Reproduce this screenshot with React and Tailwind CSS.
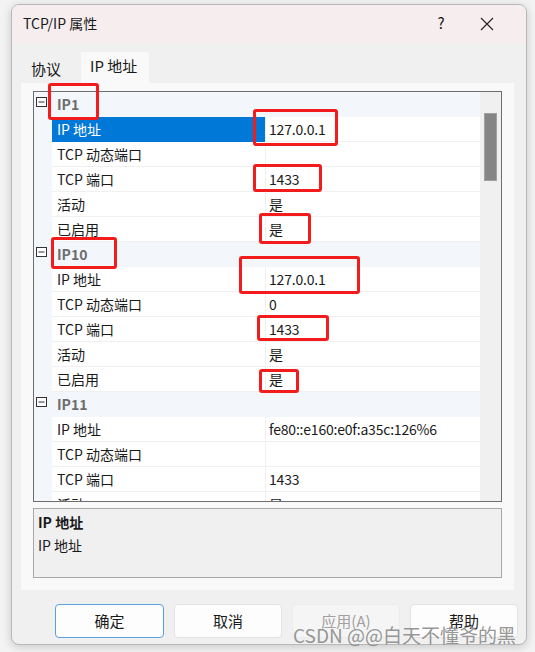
import React from 'react'

const groups = [
  { name: 'IP1', items: [['IP 地址', '127.0.0.1'], ['TCP 动态端口', ''], ['TCP 端口', '1433'], ['活动', '是'], ['已启用', '是']] },
  { name: 'IP10', items: [['IP 地址', '127.0.0.1'], ['TCP 动态端口', '0'], ['TCP 端口', '1433'], ['活动', '是'], ['已启用', '是']] },
  { name: 'IP11', items: [['IP 地址', 'fe80::e160:e0f:a35c:126%6'], ['TCP 动态端口', ''], ['TCP 端口', '1433'], ['活动', '是'], ['已启用', '是']] },
]

// red annotation boxes drawn over the screenshot
const marks = [
  'left-[48px] top-[83px] w-[51px] h-[37px]',
  'left-[253px] top-[109px] w-[85px] h-[37px]',
  'left-[253px] top-[164px] w-[69px] h-[28px]',
  'left-[259px] top-[213px] w-[52px] h-[31px]',
  'left-[51px] top-[237px] w-[66px] h-[32px]',
  'left-[239px] top-[256px] w-[121px] h-[38px]',
  'left-[257px] top-[315px] w-[72px] h-[26px]',
  'left-[259px] top-[369px] w-[40px] h-[24px]',
]

function Minus() {
  return (
    <svg width="11" height="10" viewBox="0 0 11 10" className="block">
      <rect x="0.5" y="0.5" width="10" height="9" fill="white" stroke="#333" />
      <line x1="2.5" y1="5" x2="8.5" y2="5" stroke="#333" />
    </svg>
  )
}

function Group({ g, first }) {
  return (
    <>
      <div className="h-[25px] flex bg-[#f3f6fb] shrink-0">
        <div className="w-[18px] pl-[2px] pt-[5px]"><Minus /></div>
        <div className="pl-[5px] flex items-center font-bold text-[#6d6d6d]">{g.name}</div>
      </div>
      {g.items.map(([k, v], i) => {
        const sel = first && i === 0
        return (
          <div key={i} className="h-[25px] flex shrink-0">
            <div className="w-[18px] bg-[#f3f6fb]" />
            <div className={'w-[213px] pl-[5px] flex items-center border-b ' + (sel ? 'bg-[#0078d7] text-white border-[#0078d7]' : 'bg-white border-[#f0f0f0]')}>{k}</div>
            <div className="flex-1 pl-[3px] flex items-center bg-white border-b border-l border-[#f0f0f0] tracking-[-0.2px]">{v}</div>
          </div>
        )
      })}
    </>
  )
}

export default function App() {
  return (
    <div className="relative w-[535px] h-[652px] bg-[#f3f3f3] pt-[4px] pl-[11px] text-[14px] text-[#1a1a1a] overflow-hidden" style={{ fontFamily: '"Noto Sans CJK SC", "Noto Sans", sans-serif' }}>
      <div className="w-[516px] h-[641px] rounded-[8px] border border-[#b8b8b8] bg-[#f0f0f0] shadow-[0_2px_10px_rgba(0,0,0,0.18)] flex flex-col overflow-hidden">
        <div className="h-[39px] bg-[#f6eeee] flex items-center pl-[11px] pb-[2px] shrink-0">
          <span className="text-[14px]">TCP/IP 属性</span>
          <span className="ml-auto w-[46px] text-center text-[15px]">?</span>
          <span className="w-[46px] mr-[16px] flex justify-center">
            <svg width="14" height="14" viewBox="0 0 14 14"><path d="M1 1L13 13M13 1L1 13" stroke="#222" strokeWidth="1.1" /></svg>
          </span>
        </div>
        <div className="h-[39px] flex items-end pl-[10px] shrink-0">
          <div className="w-[59px] h-[27px] pl-[9px] flex items-center text-[15px]">协议</div>
          <div className="w-[68px] h-[31px] pl-[9px] pb-[2px] flex items-center bg-[#f9f9f9] text-[15px]">IP 地址</div>
        </div>
        <div className="ml-[9px] mr-[12px] h-[507px] bg-[#f9f9f9] px-[12px] pt-[8px] flex flex-col shrink-0">
          <div className="h-[411px] border border-[#6e6e6e] flex overflow-hidden shrink-0">
            <div className="flex-1 flex flex-col overflow-hidden">
              {groups.map((g, i) => <Group key={g.name} g={g} first={i === 0} />)}
            </div>
            <div className="w-[21px] bg-[#f0f0f0] pl-[4px] pt-[21px]">
              <div className="w-[13px] h-[68px] bg-[#858585] border border-[#a0a0a0]" />
            </div>
          </div>
          <div className="mt-[6px] h-[70px] border border-[#a8a8a8] bg-[#f0f0f0] px-[4px] pt-[2px]">
            <div className="font-bold leading-[22px]">IP 地址</div>
            <div className="leading-[24px]">IP 地址</div>
          </div>
        </div>
        <div className="flex gap-[10px] pl-[43px] mt-[14px]">
          <button className="w-[109px] h-[34px] rounded-[4px] border border-[#5b9fe0] bg-[#fdfdfd] text-[15px]">确定</button>
          <button className="w-[108px] h-[34px] rounded-[4px] border border-[#e3e3e3] bg-[#fdfdfd] text-[15px]">取消</button>
          <button className="w-[108px] h-[34px] rounded-[4px] border border-[#ececec] bg-[#f5f5f5] text-[#a0a0a0] text-[15px]">应用(A)</button>
          <button className="w-[108px] h-[34px] rounded-[4px] border border-[#e3e3e3] bg-[#fdfdfd] text-[15px]">帮助</button>
        </div>
      </div>
      {marks.map((m, i) => (
        <div key={i} className={'absolute border-[3px] border-[#f21c1c] rounded-[3px] ' + m} />
      ))}
      <div className="absolute left-[293px] top-[621px] text-[19px] text-[#8a8a8a]/90 whitespace-nowrap">CSDN @@白天不懂爷的黑</div>
    </div>
  )
}
